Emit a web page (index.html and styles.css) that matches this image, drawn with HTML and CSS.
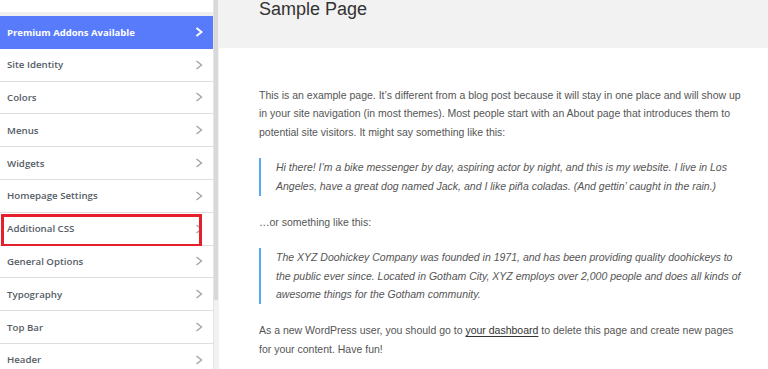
FILE: index.html
```html
<!DOCTYPE html>
<html lang="en">
<head>
<meta charset="utf-8">
<title>Customizer</title>
<link rel="stylesheet" href="styles.css">
</head>
<body>
<div class="app">
  <aside class="sidebar">
    <div class="panel">
      <div class="panel-top"></div>
      <ul class="menu">
        <li class="item premium"><span>Premium Addons Available</span><svg class="chev" viewBox="0 0 8 10"><polyline points="1.5,1 6.5,5 1.5,9"/></svg></li>
        <li class="item"><span>Site Identity</span><svg class="chev" viewBox="0 0 8 10"><polyline points="1.5,1 6.5,5 1.5,9"/></svg></li>
        <li class="item"><span>Colors</span><svg class="chev" viewBox="0 0 8 10"><polyline points="1.5,1 6.5,5 1.5,9"/></svg></li>
        <li class="item"><span>Menus</span><svg class="chev" viewBox="0 0 8 10"><polyline points="1.5,1 6.5,5 1.5,9"/></svg></li>
        <li class="item"><span>Widgets</span><svg class="chev" viewBox="0 0 8 10"><polyline points="1.5,1 6.5,5 1.5,9"/></svg></li>
        <li class="item"><span>Homepage Settings</span><svg class="chev" viewBox="0 0 8 10"><polyline points="1.5,1 6.5,5 1.5,9"/></svg></li>
        <li class="item highlighted"><span>Additional CSS</span><svg class="chev" viewBox="0 0 8 10"><polyline points="1.5,1 6.5,5 1.5,9"/></svg></li>
        <li class="item"><span>General Options</span><svg class="chev" viewBox="0 0 8 10"><polyline points="1.5,1 6.5,5 1.5,9"/></svg></li>
        <li class="item"><span>Typography</span><svg class="chev" viewBox="0 0 8 10"><polyline points="1.5,1 6.5,5 1.5,9"/></svg></li>
        <li class="item"><span>Top Bar</span><svg class="chev" viewBox="0 0 8 10"><polyline points="1.5,1 6.5,5 1.5,9"/></svg></li>
        <li class="item"><span>Header</span><svg class="chev" viewBox="0 0 8 10"><polyline points="1.5,1 6.5,5 1.5,9"/></svg></li>
      </ul>
    </div>
    <div class="scrollbar"><div class="thumb"></div></div>
  </aside>
  <main class="preview">
    <header class="page-header">
      <h1 class="page-title">Sample Page</h1>
    </header>
    <div class="content">
      <p>This is an example page. It’s different from a blog post because it will stay in one place and will show up in your site navigation (in most themes). Most people start with an About page that introduces them to potential site visitors. It might say something like this:</p>
      <blockquote><p>Hi there! I’m a bike messenger by day, aspiring actor by night, and this is my website. I live in Los Angeles, have a great dog named Jack, and I like piña coladas. (And gettin’ caught in the rain.)</p></blockquote>
      <p>…or something like this:</p>
      <blockquote><p>The XYZ Doohickey Company was founded in 1971, and has been providing quality doohickeys to the public ever since. Located in Gotham City, XYZ employs over 2,000 people and does all kinds of awesome things for the Gotham community.</p></blockquote>
      <p>As a new WordPress user, you should go to <a href="#">your dashboard</a> to delete this page and create new pages for your content. Have fun!</p>
    </div>
  </main>
</div>
</body>
</html>
```

FILE: styles.css
```css
*, *::before, *::after { box-sizing: border-box; }

html, body {
  margin: 0;
  padding: 0;
  height: 369px;
  overflow: hidden;
  background: #ffffff;
}

.app {
  display: flex;
  height: 369px;
}

/* ---------- sidebar ---------- */
.sidebar {
  display: flex;
  width: 219px;
  flex: 0 0 219px;
  height: 369px;
}

.panel {
  width: 213px;
  background: #eeeeee;
  display: flex;
  flex-direction: column;
  gap: 4px;
  overflow: hidden;
}

.panel-top {
  flex: 0 0 12px;
  height: 12px;
  background: #ffffff;
}

.menu {
  list-style: none;
  margin: 0;
  padding: 0;
  flex: 0 0 auto;
}

.item {
  position: relative;
  height: 32.8px;
  display: flex;
  align-items: center;
  justify-content: space-between;
  padding: 0 10px 0 7px;
  background: #ffffff;
  border-bottom: 1px solid #dedede;
  font-family: "Open Sans", "Noto Sans", sans-serif;
  font-size: 9.7px;
  font-weight: 600;
  color: #555d66;
}

.item.premium {
  background: #587bfc;
  color: #ffffff;
  font-weight: 700;
  font-size: 9.5px;
  border-bottom: none;
}

.chev {
  width: 8px;
  height: 10px;
  fill: none;
  stroke: #a0a5aa;
  stroke-width: 1.4;
}

.premium .chev {
  stroke: #ffffff;
  stroke-width: 2;
}

.item.highlighted::after {
  content: "";
  position: absolute;
  left: 1px;
  top: 1px;
  width: 201px;
  height: 33px;
  border: 3px solid #e5202a;
}

.scrollbar {
  width: 6px;
  background: #f1f1f1;
  border-left: 1px solid #e4e4e4;
}

.thumb {
  width: 4px;
  height: 300px;
  background: #d9d9d9;
}

/* ---------- preview ---------- */
.preview {
  flex: 1;
  min-width: 0;
  background: #ffffff;
}

.page-header {
  height: 48px;
  background: #f2f2f2;
  padding-left: 40px;
}

.page-title {
  margin: 0;
  font-family: "Liberation Sans", Arial, sans-serif;
  font-weight: 400;
  font-size: 18px;
  line-height: 20px;
  color: #333333;
  position: relative;
  top: -1px;
}

.content {
  width: 526px;
  padding: 37.7px 0 0 40px;
  font-family: "Liberation Sans", Arial, sans-serif;
  font-size: 10.5px;
  line-height: 18.6px;
  color: #555555;
}

.content p {
  margin: 0 0 16.6px 0;
}

.content blockquote {
  margin: 0 0 16.6px 0;
  padding: 0.4px 0 0.4px 15px;
  border-left: 2px solid #5aaaf2;
  font-style: italic;
}

.content blockquote p {
  margin: 0;
}

.content a {
  color: #333333;
  text-decoration: underline;
  text-underline-offset: 2px;
}
```
